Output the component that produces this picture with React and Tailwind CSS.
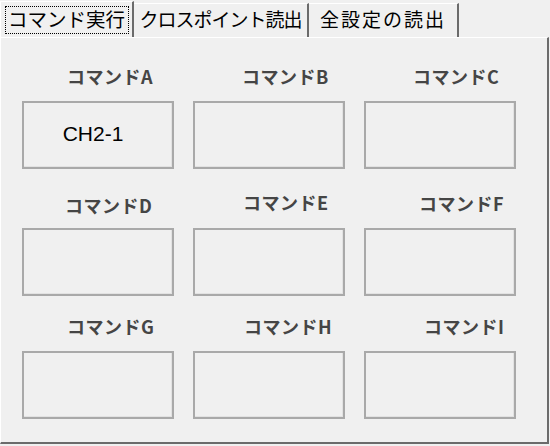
import React from 'react';

const rows = [
  {
    rowClass: 'mt-[28px]',
    boxTop: 'mt-[15px]',
    cells: [
      { name: 'コマンドA', offset: 'ml-[45px]', value: 'CH2-1' },
      { name: 'コマンドB', offset: 'ml-[49px]', value: '' },
      { name: 'コマンドC', offset: 'ml-[49px]', value: '' },
    ],
  },
  {
    rowClass: 'mt-[26px]',
    boxTop: 'mt-[13px]',
    cells: [
      { name: 'コマンドD', offset: 'ml-[43px]', value: '', lift: '' },
      { name: 'コマンドE', offset: 'ml-[50px]', value: '', lift: '-mt-[3px] mb-[3px]' },
      { name: 'コマンドF', offset: 'ml-[55px]', value: '', lift: '-mt-[2px] mb-[2px]' },
    ],
  },
  {
    rowClass: 'mt-[20px]',
    boxTop: 'mt-[15px]',
    cells: [
      { name: 'コマンドG', offset: 'ml-[45px]', value: '' },
      { name: 'コマンドH', offset: 'ml-[51px]', value: '' },
      { name: 'コマンドI', offset: 'ml-[60px]', value: '' },
    ],
  },
];

function CommandCell({ cell, boxTop }) {
  return (
    <div className="flex flex-col">
      <div className={`h-[20px] leading-[20px] text-[18px] tracking-[0.5px] font-bold text-[#454545] whitespace-nowrap ${cell.offset} ${cell.lift || ''}`}>
        {cell.name}
      </div>
      <div className={`${boxTop} h-[68px] w-[152px] border-2 border-[#a9a9a9] bg-[#f0f0f0] shadow-[inset_-1px_-1px_0_#e2e2e2] flex items-center justify-center`}>
        <span className="font-['Liberation_Sans',sans-serif] text-[21px] text-black -ml-[10px] -mt-[2px]">
          {cell.value}
        </span>
      </div>
    </div>
  );
}

export default function App() {
  return (
    <div className="w-[550px] h-[446px] bg-[#f0f0f0] font-['Noto_Sans_CJK_JP','Noto_Sans',sans-serif] overflow-hidden">
      {/* tab strip */}
      <div className="flex h-[37px] items-end">
        <div className="relative h-[36px] w-[134px] border-t border-l border-white border-r-2 border-r-[#6b6b6b] bg-[#f0f0f0] flex items-center justify-center">
          <div className="absolute left-[4px] top-[4px] right-[3px] bottom-[3px] border border-dotted border-black"></div>
          <span className="text-[19.5px] leading-none text-black -mt-[1px]">コマンド実行</span>
        </div>
        <div className="h-[34px] w-[175px] border-t border-white border-r-2 border-r-[#6b6b6b] flex items-center justify-center">
          <span className="text-[19px] leading-none text-black tracking-[-1px] -mt-[4px]">クロスポイント読出</span>
        </div>
        <div className="h-[34px] w-[150px] border-t border-white border-r-2 border-r-[#6b6b6b] flex items-center justify-center">
          <span className="text-[19px] leading-none text-black tracking-[2px] -mt-[4px]">全設定の読出</span>
        </div>
      </div>

      {/* panel */}
      <div className="h-[407px] w-[549px] border-t border-l border-white border-r-2 border-b-2 border-r-[#6b6b6b] border-b-[#6b6b6b] bg-[#f0f0f0]">
        {rows.map((row, i) => (
          <div key={i} className={`grid grid-cols-[152px_152px_152px] gap-x-[19px] pl-[21px] ${row.rowClass}`}>
            {row.cells.map((cell) => (
              <CommandCell key={cell.name} cell={cell} boxTop={row.boxTop} />
            ))}
          </div>
        ))}
      </div>
    </div>
  );
}
